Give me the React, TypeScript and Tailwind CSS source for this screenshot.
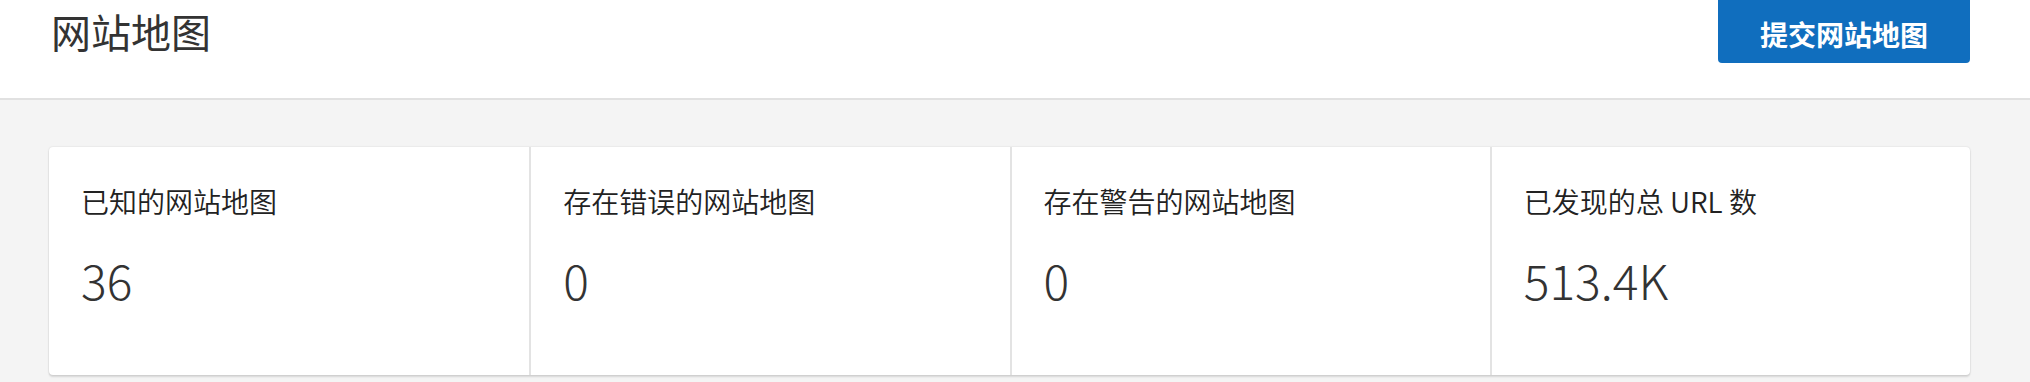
import React from "react";

const stats = [
  { label: "已知的网站地图", value: "36" },
  { label: "存在错误的网站地图", value: "0" },
  { label: "存在警告的网站地图", value: "0" },
  { label: "已发现的总 URL 数", value: "513.4K" },
];

export default function App() {
  return (
    <div
      className="min-h-screen w-full bg-[#f4f4f4]"
      style={{ fontFamily: '"Noto Sans CJK SC", "Noto Sans", sans-serif' }}
    >
      <header className="flex h-[100px] items-start justify-between border-b-2 border-[#e1e1e1] bg-white pl-[51px] pr-[60px]">
        <h1 className="mt-[11px] text-[40px] font-normal leading-none text-[#333333]">
          网站地图
        </h1>
        <button className="flex h-[63px] w-[252px] items-center justify-center rounded-b-[4px] bg-[#106ebe] pt-[4px] text-[28px] font-bold leading-none text-white">
          提交网站地图
        </button>
      </header>
      <main className="pl-[49px] pr-[60px] pt-[47px]">
        <div className="grid h-[228px] grid-cols-4 rounded-[4px] bg-white shadow-[0_0_2px_rgba(0,0,0,0.14),0_2px_2px_rgba(0,0,0,0.12)]">
          {stats.map((s, i) => (
            <div
              key={s.label}
              className={`flex flex-col pl-[32px] pt-[40px] ${i > 0 ? "border-l-2 border-[#e3e3e3]" : ""}`}
            >
              <div className="text-[28px] font-[350] leading-none text-[#222222]">
                {s.label}
              </div>
              <div className="mt-[40px] text-[48px] font-light leading-none text-[#333333]">
                {s.value}
              </div>
            </div>
          ))}
        </div>
      </main>
    </div>
  );
}
